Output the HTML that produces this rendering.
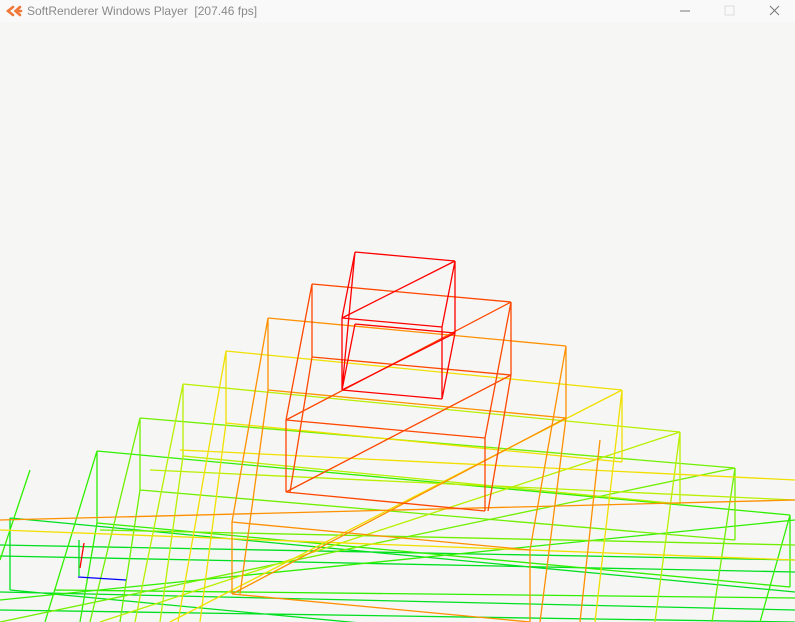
<!DOCTYPE html>
<html><head><meta charset="utf-8"><style>
html,body{margin:0;padding:0;width:795px;height:622px;overflow:hidden;background:#f6f6f4;font-family:"Liberation Sans","Noto Sans CJK KR",sans-serif}
#tb{position:absolute;left:0;top:0;width:795px;height:22px;background:#f9f9f9}
#tt{position:absolute;left:27px;top:4px;font-size:12px;color:#8a8a8a;white-space:pre}
svg{position:absolute;left:0;top:0;display:block}
</style></head><body>
<div id="tb"></div>
<div id="tt">SoftRenderer Windows Player  [207.46 fps]</div>
<svg width="795" height="622" viewBox="0 0 795 622" fill="none" stroke-width="1.3">
<g stroke="#f07838" stroke-width="2.6" stroke-linecap="round"><path d="M13 7L8 11L13 15"/><path d="M20 7L15.5 11L20 15M16 11H21"/></g>
<g stroke="#777" stroke-width="1"><path d="M680 11H690"/><rect x="725" y="6" width="9" height="9" stroke="#ddd"/><path d="M770 6L779 15M779 6L770 15"/></g>
<g stroke="#00e020"><path d="M10 518L880 600M10 590L880 672M10 518L10 590M0 545L795 560M0 592L795 610M0 556L795 572M0 610L795 622"/></g>
<g stroke="#30f000"><path d="M97 451L790 515M97 523L790 587M97 451L97 523M790 515L790 587M97 451L45 622M97 523L80 622M790 515L760 622M0 600L795 520M54 590L795 598M30 470L0 560"/></g>
<g stroke="#70f000"><path d="M140 418L735 468M140 490L735 540M140 418L140 490M735 468L735 540M140 418L90 622M140 490L120 622M735 468L712 622M0 622L735 468M100 530L795 545"/></g>
<g stroke="#b8f000"><path d="M183 384L680 432M183 456L680 504M183 456L183 384M680 432L680 504M183 384L135 622M183 456L160 622M680 432L655 622M100 622L680 432M150 470L795 500"/></g>
<g stroke="#f0e000"><path d="M226 351L622 390M226 423L622 462M226 351L226 423M622 390L622 462M226 351L178 622M226 423L200 622M622 390L595 622M170 622L622 390M0 530L795 560M180 450L795 480"/></g>
<g stroke="#ff9000"><path d="M268 318L566 346M268 390L566 418M268 318L268 390M566 346L566 418M268 318L232 522M268 390L240 594M566 346L530 550M566 418L540 622M232 522L530 550M232 594L530 622M232 522L232 594M530 550L530 622M232 594L566 418M0 520L795 500M600 440L580 622"/></g>
<g stroke="#ff4800"><path d="M312 284L511 302M312 357L511 375M312 284L312 357M511 302L511 375M312 284L286 420M312 357L290 492M511 302L485 438M511 375L488 511M286 420L485 438M286 492L485 511M286 420L286 492M485 438L485 511M286 492L511 375M286 420L511 302"/></g>
<g stroke="#ff0000"><path d="M355 252L455 261M355 324L455 333M355 252L342 318M355 324L342 390M455 261L442 327M455 333L442 399M342 318L442 327M342 390L442 399M342 318L342 390M442 327L442 399M355 252L342 390M455 261L455 333M342 318L455 261M342 390L455 333"/></g>
<path d="M84 543L80 568" stroke="#f00"/>
<path d="M78 577L126 580" stroke="#0000ff"/>
<path d="M79 540L79 576" stroke="#00e020"/>
</svg>
</body></html>
